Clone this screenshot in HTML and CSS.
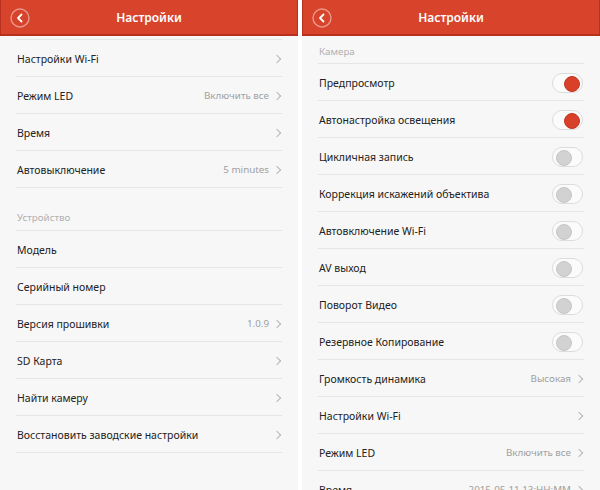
FILE: index.html
```html
<!DOCTYPE html>
<html lang="ru">
<head>
    <meta charset="UTF-8">
    <title>Настройки</title>
    <link rel="stylesheet" href="styles.css">
</head>
<body>
    <div class="screen">
        <header class="topbar">
            <span class="back">
                <svg width="20" height="20" viewBox="0 0 20 20"><circle cx="10" cy="10" r="9" fill="none" stroke="rgba(255,255,255,0.45)" stroke-width="1.4"/><polyline points="11.5,6.5 8,10 11.5,13.5" fill="none" stroke="#fff" stroke-width="1.8" stroke-linecap="round" stroke-linejoin="round"/></svg>
            </span>
            <h1>Настройки</h1>
        </header>
        <ul class="list first">
            <li class="row"><span class="label">Настройки Wi-Fi</span><span class="chev"></span></li>
            <li class="row"><span class="label">Режим LED</span><span class="value">Включить все</span><span class="chev"></span></li>
            <li class="row"><span class="label">Время</span><span class="chev"></span></li>
            <li class="row"><span class="label">Автовыключение</span><span class="value">5 minutes</span><span class="chev"></span></li>
        </ul>
        <div class="section gap">Устройство</div>
        <ul class="list">
            <li class="row"><span class="label">Модель</span></li>
            <li class="row"><span class="label">Серийный номер</span></li>
            <li class="row"><span class="label">Версия прошивки</span><span class="value">1.0.9</span><span class="chev"></span></li>
            <li class="row"><span class="label">SD Карта</span><span class="chev"></span></li>
            <li class="row"><span class="label">Найти камеру</span><span class="chev"></span></li>
            <li class="row"><span class="label">Восстановить заводские настройки</span><span class="chev"></span></li>
        </ul>
    </div>

    <div class="screen">
        <header class="topbar">
            <span class="back">
                <svg width="20" height="20" viewBox="0 0 20 20"><circle cx="10" cy="10" r="9" fill="none" stroke="rgba(255,255,255,0.45)" stroke-width="1.4"/><polyline points="11.5,6.5 8,10 11.5,13.5" fill="none" stroke="#fff" stroke-width="1.8" stroke-linecap="round" stroke-linejoin="round"/></svg>
            </span>
            <h1>Настройки</h1>
        </header>
        <div class="section">Камера</div>
        <ul class="list">
            <li class="row"><span class="label">Предпросмотр</span><span class="toggle on"></span></li>
            <li class="row"><span class="label">Автонастройка освещения</span><span class="toggle on"></span></li>
            <li class="row"><span class="label">Цикличная запись</span><span class="toggle"></span></li>
            <li class="row"><span class="label">Коррекция искажений объектива</span><span class="toggle"></span></li>
            <li class="row"><span class="label">Автовключение Wi-Fi</span><span class="toggle"></span></li>
            <li class="row"><span class="label">AV выход</span><span class="toggle"></span></li>
            <li class="row"><span class="label">Поворот Видео</span><span class="toggle"></span></li>
            <li class="row"><span class="label">Резервное Копирование</span><span class="toggle"></span></li>
            <li class="row"><span class="label">Громкость динамика</span><span class="value">Высокая</span><span class="chev"></span></li>
            <li class="row"><span class="label">Настройки Wi-Fi</span><span class="chev"></span></li>
            <li class="row"><span class="label">Режим LED</span><span class="value">Включить все</span><span class="chev"></span></li>
            <li class="row"><span class="label">Время</span><span class="value">2015-05-11 13:HH:MM</span><span class="chev"></span></li>
        </ul>
    </div>
</body>
</html>
```
FILE: styles.css
```css
* {
    margin: 0;
    padding: 0;
    box-sizing: border-box;
}

body {
    width: 600px;
    height: 490px;
    overflow: hidden;
    display: flex;
    gap: 4px;
    background: #ffffff;
    font-family: "Noto Sans", "Open Sans", sans-serif;
    color: #222;
}

.screen {
    width: 298px;
    height: 490px;
    overflow: hidden;
    background: #f7f7f7;
}

.topbar {
    height: 36px;
    background: #d8442b;
    border-bottom: 2px solid #b7311e;
    border-left: 1px solid #b7311e;
    border-right: 1px solid #b7311e;
    display: flex;
    align-items: center;
    justify-content: center;
    position: relative;
}

.topbar h1 {
    font-size: 12px;
    font-weight: 600;
    color: #fff;
    padding-top: 1px;
}

.back {
    position: absolute;
    left: 9px;
    top: 8px;
    width: 20px;
    height: 20px;
}

.list {
    list-style: none;
    margin: 0 16px;
}

.list.first {
    margin-top: 3px;
    border-top: 1px solid #e6e6e6;
}

.row {
    height: 37px;
    border-bottom: 1px solid #e6e6e6;
    display: flex;
    align-items: center;
    padding: 1px 0 0 1px;
    font-size: 10.5px;
}

.label {
    flex: 1;
}

.value {
    color: #a0a0a0;
    font-size: 9.8px;
    margin-right: 5px;
}

.chev {
    width: 6px;
    height: 6px;
    border-top: 1px solid #b5b5b5;
    border-right: 1px solid #b5b5b5;
    transform: rotate(45deg);
    margin-right: 2px;
}

.section {
    margin: 0 16px;
    height: 28px;
    border-bottom: 1px solid #e6e6e6;
    padding: 9px 0 0 1px;
    font-size: 9.8px;
    color: #b0b0b0;
}

.section.gap {
    height: 43px;
    padding-top: 23px;
}

.toggle {
    width: 31px;
    height: 20px;
    border: 1px solid #dcdcdc;
    border-radius: 10px;
    background: #fbfbfb;
    position: relative;
    margin-right: 1px;
}

.toggle::after {
    content: "";
    position: absolute;
    top: 2px;
    left: 3px;
    width: 14px;
    height: 14px;
    border-radius: 50%;
    background: #d2d2d2;
    border: 1px solid #c6c6c6;
}

.toggle.on::after {
    left: auto;
    right: 2px;
    background: #d9402a;
    border-color: #c43522;
}
```
